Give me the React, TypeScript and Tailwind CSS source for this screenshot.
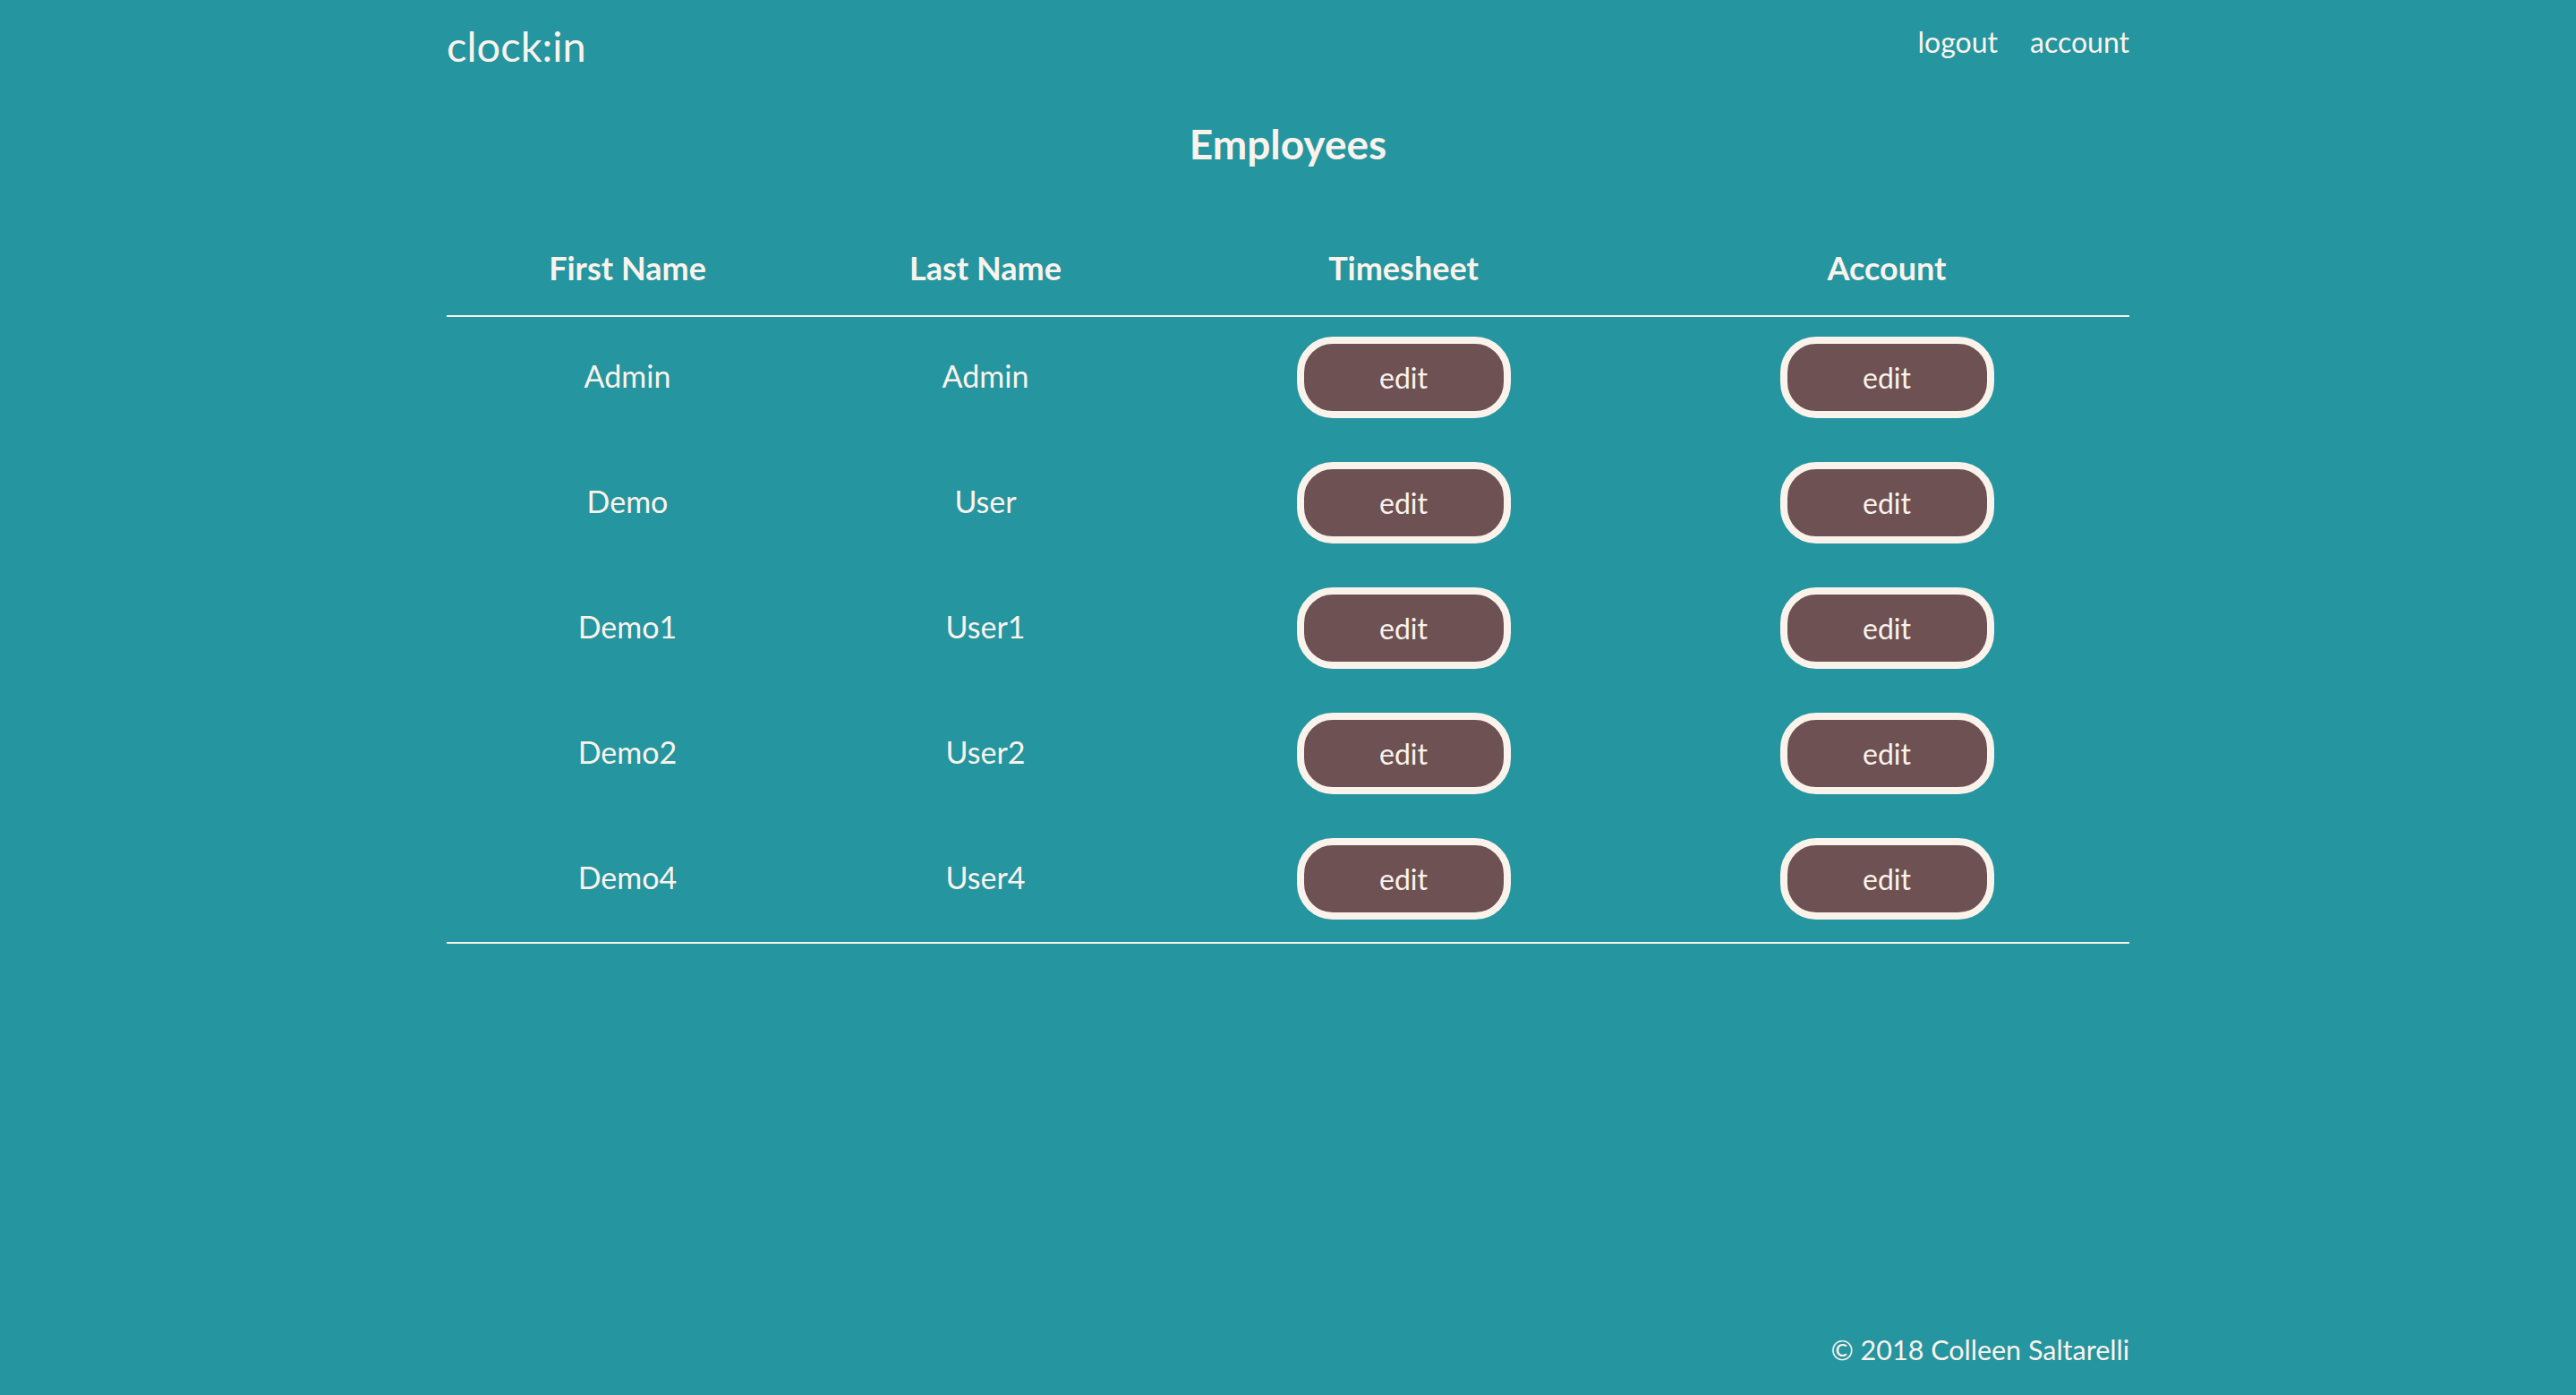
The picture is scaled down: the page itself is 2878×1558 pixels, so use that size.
const employees = [
  { first: "Admin", last: "Admin" },
  { first: "Demo", last: "User" },
  { first: "Demo1", last: "User1" },
  { first: "Demo2", last: "User2" },
  { first: "Demo4", last: "User4" },
];

function EditButton() {
  return (
    <button className="w-[239px] h-[91px] rounded-[40px] border-[8px] border-[#faf3ec] bg-[#6e5152] text-[32px] leading-none text-[#faf3ec]">
      edit
    </button>
  );
}

export default function App() {
  return (
    <div className="min-h-screen bg-[#25959f] text-[#faf3ec] font-['Lato',sans-serif] flex flex-col">
      <div className="w-[1880px] mx-auto flex flex-col flex-1">
        {/* top bar */}
        <header className="h-[100px] flex justify-between items-start">
          <div className="mt-[23px] text-[47px] leading-[56px]">clock:in</div>
          <nav className="mt-[29px] flex gap-[36px] text-[32px] leading-[36px]">
            <a href="#">logout</a>
            <a href="#">account</a>
          </nav>
        </header>

        <h1 className="mt-[35px] text-center text-[46px] leading-[52px] font-bold">Employees</h1>

        {/* employee table */}
        <div className="mt-[90px]">
          <div className="grid grid-cols-[404px_396px_538px_542px] text-center text-[36px] leading-[44px] font-bold pb-[31px] border-b-2 border-[#faf3ec]">
            <div>First Name</div>
            <div>Last Name</div>
            <div>Timesheet</div>
            <div>Account</div>
          </div>
          <div className="flex flex-col gap-[49px] pt-[22px] pb-[25px] border-b-2 border-[#faf3ec]">
            {employees.map((e) => (
              <div
                key={e.first}
                className="grid grid-cols-[404px_396px_538px_542px] items-center justify-items-center h-[91px] text-[34px] leading-[40px]"
              >
                <div className="-mt-[3px]">{e.first}</div>
                <div className="-mt-[3px]">{e.last}</div>
                <EditButton />
                <EditButton />
              </div>
            ))}
          </div>
        </div>

        <footer className="mt-auto pb-[33px] text-right text-[30.5px] leading-[36px]">
          © 2018 Colleen Saltarelli
        </footer>
      </div>
    </div>
  );
}
